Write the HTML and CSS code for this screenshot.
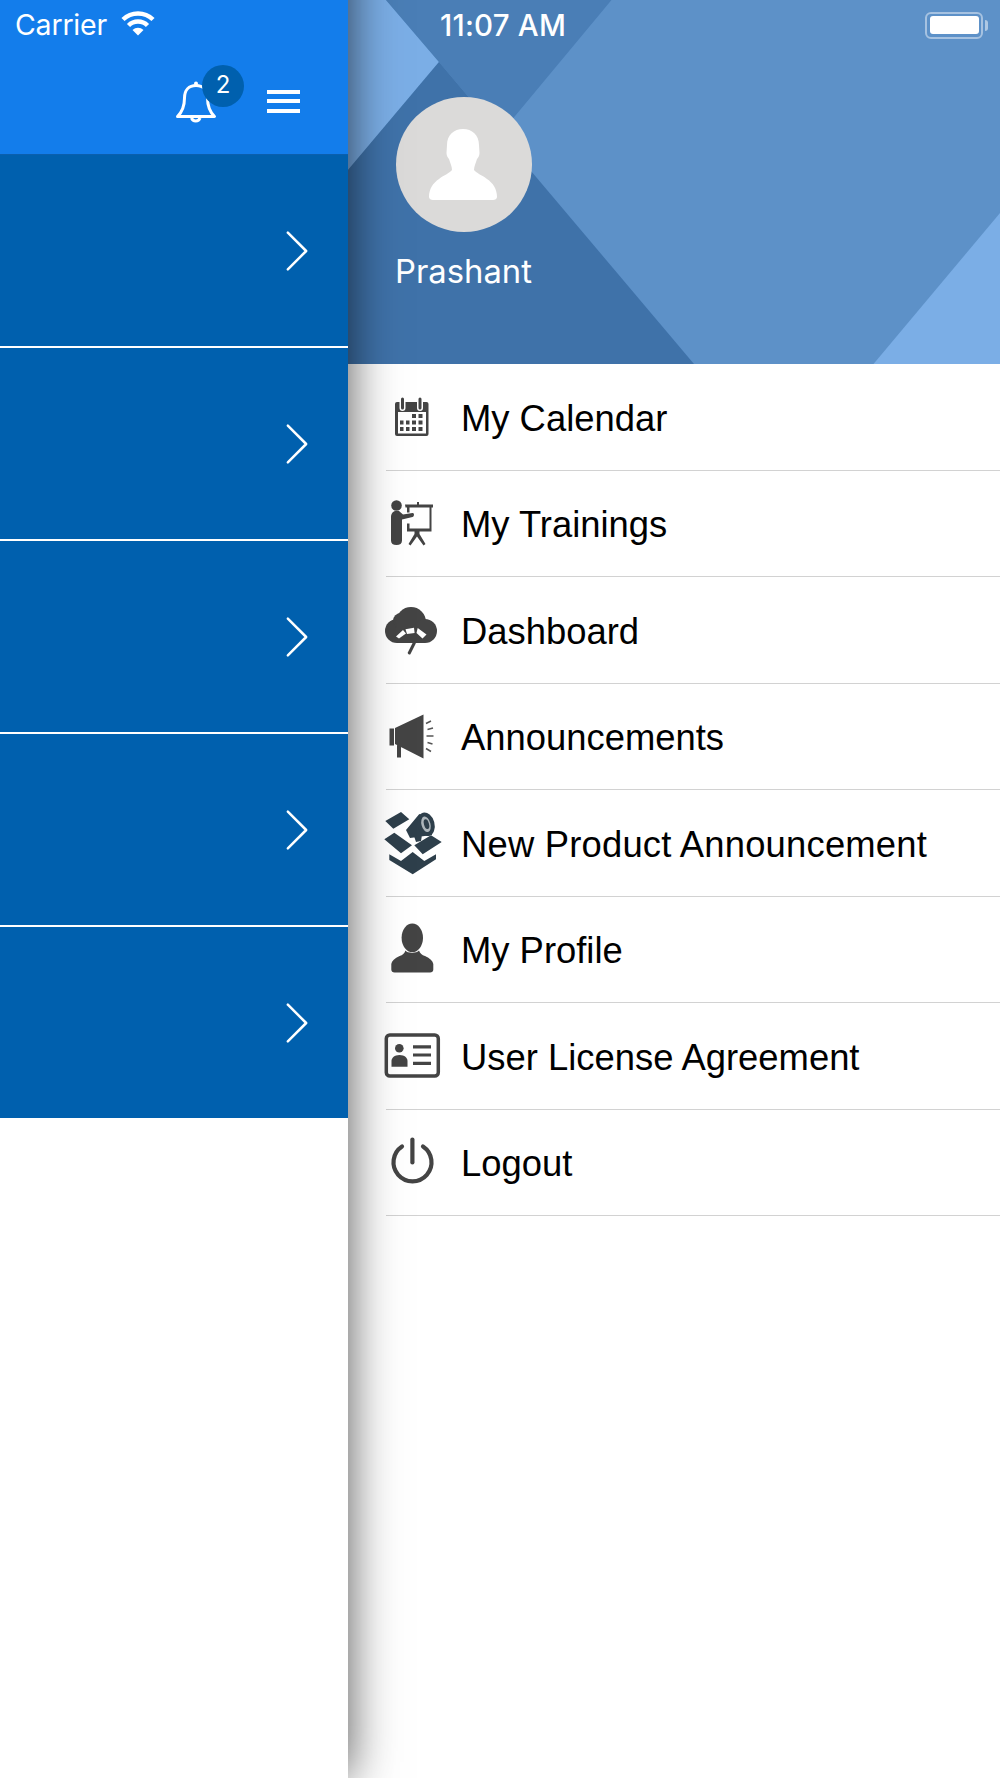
FILE: index.html
```html
<!DOCTYPE html>
<html lang="en">
<head>
<meta charset="utf-8">
<title>Menu</title>
<link rel="stylesheet" href="styles.css">
</head>
<body>
<div class="app">
  <aside class="main-pane">
    <header class="topbar">
      <div class="carrier-row">
        <span class="carrier">Carrier</span>
        <svg class="wifi" viewBox="121 10 34 28"><path d="M123 20.500A21.500 21.500 0 0 1 153 20.500" /><path d="M128.500 26.500A13.500 13.500 0 0 1 147.500 26.500"/><path class="wedge" d="M132.500 31a8 8 0 0 1 11 0l-5.500 5.500z"/></svg>
      </div>
      <div class="actions">
        <div class="bell-wrap">
          <svg class="bell" viewBox="174 78 44 48"><path d="M177.500 116.500C183 111 184.500 104 184.500 98C184.500 90 189 85.500 196 85.500C203 85.500 207.500 90 207.500 98C207.500 104 209 111 214.500 116.500Z"/><path d="M191.500 118a4.500 4.500 0 0 0 8.500 0"/><circle class="knob" cx="196" cy="83.500" r="2"/></svg>
          <span class="badge">2</span>
        </div>
        <div class="burger"><i></i><i></i><i></i></div>
      </div>
    </header>
    <div class="tile"><svg class="chev" viewBox="0 0 24 44"><path d="M2 2L22 22L2 42"/></svg></div>
    <div class="tile"><svg class="chev" viewBox="0 0 24 44"><path d="M2 2L22 22L2 42"/></svg></div>
    <div class="tile"><svg class="chev" viewBox="0 0 24 44"><path d="M2 2L22 22L2 42"/></svg></div>
    <div class="tile"><svg class="chev" viewBox="0 0 24 44"><path d="M2 2L22 22L2 42"/></svg></div>
    <div class="tile"><svg class="chev" viewBox="0 0 24 44"><path d="M2 2L22 22L2 42"/></svg></div>
  </aside>

  <section class="drawer">
    <div class="profile">
      <svg class="facets" viewBox="348 0 652 364" preserveAspectRatio="none">
        <rect class="f-main" x="348" y="0" width="652" height="364"/>
        <polygon class="f-light" points="348,0 386,0 439,62 348,170"/>
        <polygon class="f-mid" points="386,0 611.500,0 500,134 439,62"/>
        <polygon class="f-dark" points="439,62 694,364 348,364 348,170"/>
        <polygon class="f-light" points="873.500,364 1000,213 1000,364"/>
      </svg>
      <div class="status">
        <span class="time">11:07 AM</span>
        <span class="battery"><i></i></span>
      </div>
      <div class="avatar">
        <svg viewBox="396 97 136 134"><path d="M447 145C447 135 454 129 463 129C472 129 479 135 479 145L479.500 153C479.500 156 478 158 477 159C476 163 474 166 474 170C476 173 482 175 487 179C493 183 497 189 497 197C497 199 495 200 493 200L433 200C431 200 429 199 429 197C429 189 433 183 439 179C444 175 450 173 452 170C452 166 450 163 449 159C448 158 446.500 156 446.500 153Z"/></svg>
      </div>
      <div class="name">Prashant</div>
    </div>
    <nav class="menu">
      <a class="item">
        <svg class="ico" viewBox="380 381 64 72">
          <rect class="solid" x="395" y="402" width="33.500" height="34" rx="2"/>
          <rect class="hole" x="398" y="412" width="28" height="21.500"/>
          <path class="ring-halo" d="M402.500 399v9M420 399v9"/>
          <path class="ring" d="M402.500 399v9M420 399v9"/>
          <path class="solid" d="M412 414h4v4h-4zM418.500 414h4v4h-4zM400 420.500h3.500v4h-3.500zM406 420.500h3.500v4h-3.500zM412 420.500h4v4h-4zM418.500 420.500h4v4h-4zM400 427h3.500v4h-3.500zM406 427h3.500v4h-3.500zM412 427h4v4h-4zM418.500 427h4v4h-4z"/>
        </svg>
        <span class="label">My Calendar</span>
      </a>
      <a class="item">
        <svg class="ico" viewBox="380 487.500 64 72">
          <circle class="solid" cx="396.500" cy="506" r="5.300"/>
          <path class="solid" d="M391 518C391 514 393 511.500 396 511.500H399L403 515L412.500 513.500C414.500 513.200 414.500 517 412.500 517.500L402 520V541C402 544 400 545.500 396.500 545.500C393 545.500 391 544 391 541Z"/>
          <path class="solid" d="M405 505h28v3h-1.500v24h-12v2.500l6 10-2 1.500-6.500-9-6.500 9-2-1.500 6-10v-2.500h-7.500v-8h2.500v5h20v-21h-20v5h-2.500v-5h-1.500z"/>
          <rect class="solid" x="417" y="502.500" width="2" height="3"/>
        </svg>
        <span class="label">My Trainings</span>
      </a>
      <a class="item">
        <svg class="ico" viewBox="380 594 64 72">
          <circle class="solid" cx="397" cy="631" r="12"/>
          <circle class="solid" cx="401" cy="621" r="8"/>
          <circle class="solid" cx="411" cy="622" r="15"/>
          <circle class="solid" cx="425" cy="631" r="12"/>
          <rect class="solid" x="397" y="625" width="28" height="18"/>
          <path class="hole" d="M396 636.500L403 630L406 633.500L399 638.500ZM405.500 629.300L414 627.800L414.600 633L407 634ZM417.700 628L426.500 634.500L422.500 638.500L416.500 633Z"/>
          <path class="needle" d="M414.300 643L409.300 653"/>
        </svg>
        <span class="label">Dashboard</span>
      </a>
      <a class="item">
        <svg class="ico" viewBox="380 700.500 64 72">
          <path class="solid" d="M389.500 729h4.500v17h-4.500zM395 728.500l28.500-13.500v44l-28.500-14.500zM397 745h4v13h-4z"/>
          <path class="rays" d="M426 724l5-2.500M427.500 730l5.500-1.500M426.500 736.500h7M427.500 743l5 1.500M426 749l5 3"/>
        </svg>
        <span class="label">Announcements</span>
      </a>
      <a class="item">
        <svg class="ico" viewBox="380 807 64 72">
          <path class="slate" d="M385.300 821L401 812L409.300 819.300L393.300 828.700ZM384.300 839.300L394.300 832.700L412 845.300L401 853.300ZM414.300 845.300L431 835.300L441.700 842L422.700 854.300ZM389.300 854.300L401 861L412.700 852L424.300 861L436 854.300V859.300L412.700 874.300L389.300 860Z"/>
          <path class="slate" d="M406 830L419.300 814L431 819L432 835L410 838ZM414 836L422 835L421 841L416 842Z"/>
          <ellipse class="slate" cx="426" cy="824.300" rx="8.500" ry="12" transform="rotate(-15 426 824.300)"/>
          <ellipse class="mouth" cx="426" cy="824.300" rx="4.500" ry="8" transform="rotate(-15 426 824.300)"/>
          <ellipse class="slate" cx="426.500" cy="824.300" rx="2.500" ry="5" transform="rotate(-15 426 824.300)"/>
        </svg>
        <span class="label label-wide">New Product Announcement</span>
      </a>
      <a class="item">
        <svg class="ico" viewBox="380 913.500 64 72">
          <ellipse class="solid" cx="412.300" cy="938.300" rx="10.700" ry="14.300"/>
          <path class="solid" d="M405.500 951C407 954 417 954 419 951C420 954 422 955.500 425 956.500C430 958.500 432.800 961.500 433.300 964.500V970C433.300 972 432 973 430 973H394.600C392.600 973 391.300 972 391.300 970V964.500C391.800 961.500 394.600 958.500 399.600 956.500C402.600 955.500 404.500 954 405.500 951Z"/>
        </svg>
        <span class="label">My Profile</span>
      </a>
      <a class="item">
        <svg class="ico" viewBox="380 1020 64 72">
          <rect class="outline" x="386.300" y="1035" width="52" height="41" rx="3.500"/>
          <circle class="solid" cx="399.300" cy="1048.300" r="4.300"/>
          <path class="solid" d="M391.500 1066.800v-6c0-3 3-5.800 8-5.800s8 2.800 8 5.800v6z"/>
          <path class="lines" d="M413 1046.800h18M413 1055h18M413 1063.300h18"/>
        </svg>
        <span class="label">User License Agreement</span>
      </a>
      <a class="item">
        <svg class="ico" viewBox="380 1126.500 64 72">
          <path class="power" d="M402 1147A19 19 0 1 0 423 1147"/>
          <path class="power" d="M412.400 1140V1163"/>
        </svg>
        <span class="label">Logout</span>
      </a>
    </nav>
  </section>
</div>
</body>
</html>
```
FILE: styles.css
```css
* { box-sizing: border-box; }
html, body { margin: 0; padding: 0; background: #fff; }
.app {
  display: flex;
  width: 1000px;
  height: 1778px;
  overflow: hidden;
  position: relative;
  font-family: "Liberation Sans", Arial, sans-serif;
}
.main-pane {
  position: relative;
  z-index: 2;
  flex: 0 0 348px;
  display: flex;
  flex-direction: column;
  background: #fff;
}
.main-pane::after {
  content: "";
  position: absolute;
  left: 0; right: 0; top: -120px; bottom: 0;
  box-shadow: 0 0 46px rgba(0, 0, 0, .68);
  clip-path: inset(-120px -120px -120px 0);
  z-index: -1;
}
.topbar {
  height: 155px;
  background: #137deb;
  border-bottom: 1px solid #0b5fae;
  color: #fff;
  display: flex;
  flex-direction: column;
}
.carrier-row {
  display: flex;
  align-items: center;
  height: 50px;
  padding-left: 15px;
}
.carrier {
  font-family: Inter, "Liberation Sans", sans-serif;
  font-size: 28.500px;
  line-height: 50px;
  letter-spacing: -.2px;
}
.wifi { width: 34px; height: 28px; margin-left: 14px; margin-top: -4px; fill: none; stroke: #fff; stroke-width: 4.500px; }
.wifi .wedge { fill: #fff; stroke: none; }
.actions {
  display: flex;
  justify-content: flex-end;
  align-items: flex-start;
  padding-right: 48px;
}
.bell-wrap {
  position: relative;
  width: 44px;
  height: 48px;
  margin-top: 28px;
  margin-right: 49px;
}
.bell { display: block; width: 44px; height: 48px; fill: none; stroke: #fff; stroke-width: 3px; stroke-linejoin: round; }
.bell .knob { fill: #fff; stroke: none; }
.badge {
  position: absolute;
  left: 28px;
  top: -13px;
  width: 42px;
  height: 42px;
  border-radius: 50%;
  background: #0060ae;
  color: #fff;
  font-family: Inter, "Liberation Sans", sans-serif;
  font-size: 24px;
  line-height: 40px;
  text-align: center;
}
.burger {
  display: flex;
  flex-direction: column;
  gap: 5.500px;
  width: 33px;
  margin-top: 39.500px;
}
.burger i { display: block; height: 4px; background: #fff; }
.tile {
  height: 193px;
  background: #0060ae;
  border-bottom: 2px solid #fff;
  display: flex;
  justify-content: flex-end;
  align-items: center;
  padding-right: 40px;
}
.tile:last-child { height: 191px; border-bottom: 0; }
.chev { width: 22px; height: 42px; fill: none; stroke: #fff; stroke-width: 2.700px; stroke-linecap: round; stroke-linejoin: round; }

.drawer { flex: 1; display: flex; flex-direction: column; min-width: 0; }
.profile {
  position: relative;
  height: 364px;
  color: #fff;
  padding-left: 48px;
}
.facets { position: absolute; inset: 0; width: 100%; height: 100%; display: block; }
.f-main { fill: #5d91c8; }
.f-light { fill: #7baee6; }
.f-mid { fill: #4a7eb6; }
.f-dark { fill: #3f72a9; }
.status {
  position: relative;
  display: flex;
  align-items: center;
  height: 50px;
  margin-left: -48px;
  padding: 0 13px 0 92px;
}
.time {
  font-family: Inter, "Liberation Sans", sans-serif;
  font-weight: 500;
  font-size: 29.500px;
  letter-spacing: .2px;
}
.battery {
  position: relative;
  margin-left: auto;
  width: 58px;
  height: 27px;
  border: 2px solid rgba(255, 255, 255, .45);
  border-radius: 6px;
  padding: 2.500px;
  margin-right: 4px;
}
.battery i { display: block; height: 100%; background: #fff; border-radius: 3px; }
.battery::after {
  content: "";
  position: absolute;
  right: -7px; top: 6px;
  width: 3px; height: 11px;
  background: rgba(255, 255, 255, .5);
  border-radius: 0 3px 3px 0;
}
.avatar {
  position: relative;
  width: 136px;
  height: 135px;
  margin-top: 47px;
  border-radius: 50%;
  background: #dbdad9;
}
.avatar svg { display: block; width: 136px; height: 134px; fill: #fff; }
.name {
  position: relative;
  margin-top: 18px;
  margin-left: -1px;
  font-family: Inter, "Liberation Sans", sans-serif;
  font-size: 32.800px;
  line-height: 42px;
}

.menu { display: flex; flex-direction: column; padding-left: 38px; background: transparent; }
.item {
  display: flex;
  align-items: center;
  height: 106.500px;
  border-bottom: 1px solid #d2d2d2;
}
.ico { flex: none; width: 64px; height: 72px; margin-left: -6px; }
.label {
  margin-left: 17px;
  padding-top: 3.500px;
  font-size: 36.400px;
  color: #000;
  white-space: nowrap;
}
.label-wide { letter-spacing: .2px; }
.solid { fill: #444; }
.hole { fill: #fff; }
.mouth { fill: #aeb6bb; }
.slate { fill: #2e3f4b; }
.ring { fill: none; stroke: #444; stroke-width: 3px; stroke-linecap: round; }
.ring-halo { fill: none; stroke: #fff; stroke-width: 6px; stroke-linecap: round; }
.needle { fill: none; stroke: #444; stroke-width: 3px; stroke-linecap: round; }
.rays { fill: none; stroke: #555; stroke-width: 1.500px; }
.outline { fill: none; stroke: #444; stroke-width: 3.500px; }
.lines { fill: none; stroke: #444; stroke-width: 3.200px; }
.power { fill: none; stroke: #444; stroke-width: 4.200px; stroke-linecap: round; }
```
